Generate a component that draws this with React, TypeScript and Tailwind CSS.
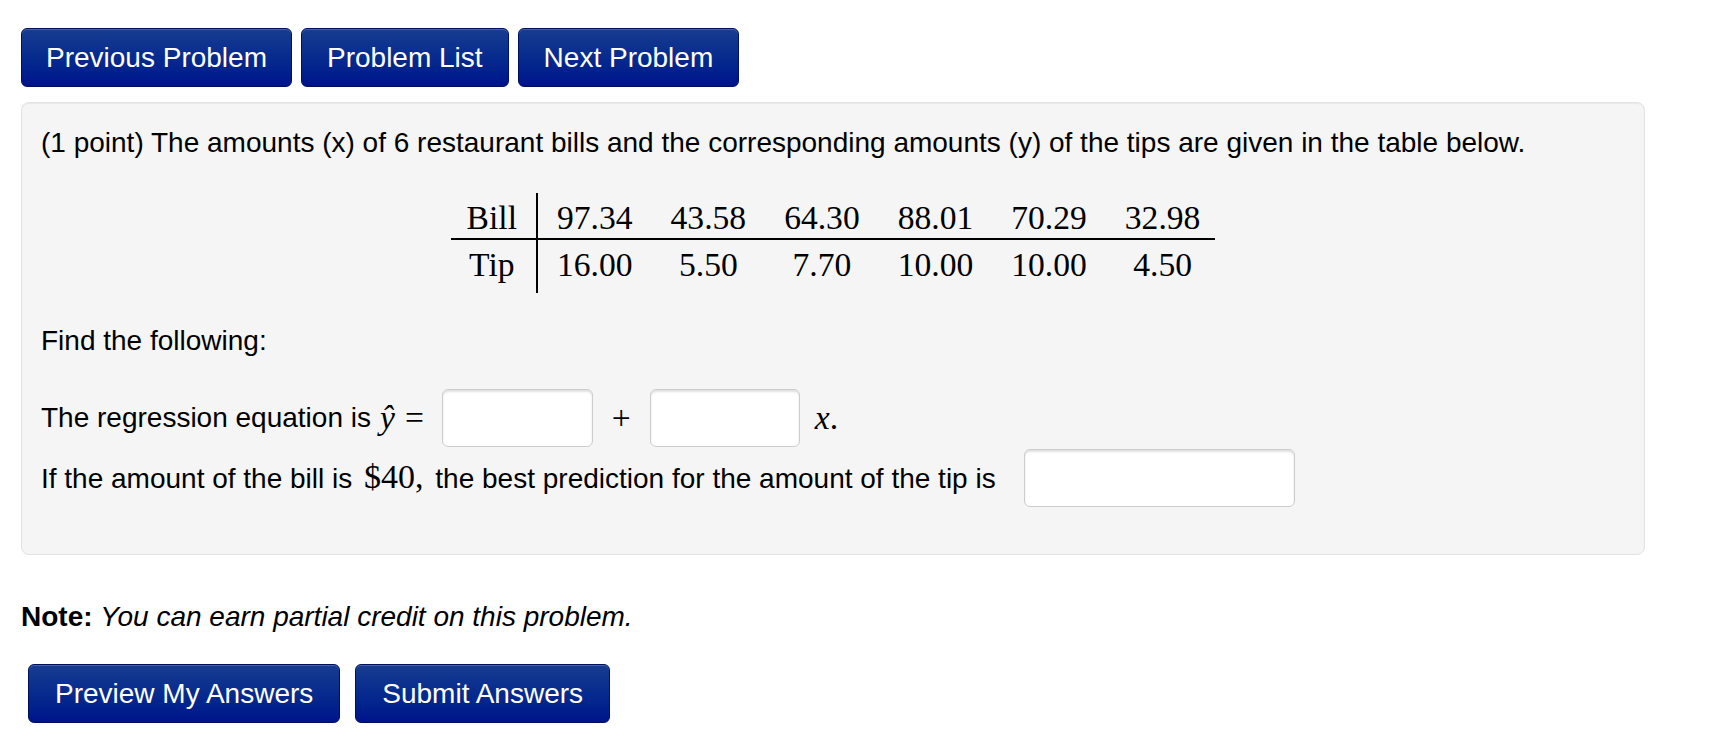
import React from 'react';

const bills = ['97.34', '43.58', '64.30', '88.01', '70.29', '32.98'];
const tips = ['16.00', '5.50', '7.70', '10.00', '10.00', '4.50'];

function NavButton({ label, pad = 'px-[26px]' }: { label: string; pad?: string }) {
  return (
    <button
      className={`h-[59px] ${pad} rounded-[6px] border border-[#001060] bg-gradient-to-b from-[#173c90] to-[#00128b] text-white text-[28px] leading-none shadow-[inset_0_1px_0_rgba(255,255,255,0.2)]`}
    >
      {label}
    </button>
  );
}

function AnswerBox({ width }: { width: string }) {
  return (
    <input
      type="text"
      className={`${width} h-[58px] bg-white border border-[#cccccc] rounded-[6px] shadow-[inset_0_2px_2px_rgba(0,0,0,0.12)] outline-none`}
    />
  );
}

export default function App() {
  const serif = "font-['Liberation_Serif',serif]";

  return (
    <div className="min-h-screen bg-white text-black font-['Liberation_Sans',Arial,sans-serif] text-[28px] leading-[40px]">
      <div className="pt-[28px] pl-[21px] flex gap-[9px]">
        <NavButton label="Previous Problem" pad="px-[24px]" />
        <NavButton label="Problem List" pad="px-[25px]" />
        <NavButton label="Next Problem" pad="px-[25px]" />
      </div>

      <div className="mt-[15px] ml-[21px] w-[1624px] bg-[#f5f5f5] border border-[#e3e3e3] rounded-[8px] px-[19px] pt-[20px] pb-[47px] shadow-[inset_0_1px_1px_rgba(0,0,0,0.05)]">
        <p>
          (1 point) The amounts (x) of 6 restaurant bills and the corresponding amounts (y) of the tips
          are given in the table below.
        </p>

        <div className="mt-[30px] flex justify-center">
          <table className={`${serif} text-[33.6px] leading-none border-collapse`}>
            <tbody>
              <tr className="h-[46px]">
                <td className="pl-[16px] pr-[19px] pt-[4px] text-center border-r-2 border-b-2 border-black">
                  Bill
                </td>
                {bills.map((b, i) => (
                  <td
                    key={i}
                    className={`pl-[19px] ${i === bills.length - 1 ? 'pr-[15px]' : 'pr-[19px]'} pt-[4px] text-center border-b-2 border-black`}
                  >
                    {b}
                  </td>
                ))}
              </tr>
              <tr className="h-[54px]">
                <td className="pl-[16px] pr-[19px] pb-[4px] text-center border-r-2 border-black">Tip</td>
                {tips.map((t, i) => (
                  <td
                    key={i}
                    className={`pl-[19px] ${i === tips.length - 1 ? 'pr-[15px]' : 'pr-[19px]'} pb-[4px] text-center`}
                  >
                    {t}
                  </td>
                ))}
              </tr>
            </tbody>
          </table>
        </div>

        <p className="mt-[28px]">Find the following:</p>

        <div className="mt-[28px] flex items-center h-[58px]">
          <span>The regression equation is</span>
          <span className={`${serif} text-[33.6px] ml-[9px]`}>
            <i>ŷ</i>
            <span className="ml-[10px]">=</span>
          </span>
          <span className="ml-[18px] flex">
            <AnswerBox width="w-[151px]" />
          </span>
          <span className={`${serif} text-[33.6px] mx-[19px]`}>+</span>
          <AnswerBox width="w-[150px]" />
          <span className={`${serif} text-[33.6px] ml-[15px]`}>
            <i>x</i>.
          </span>
        </div>

        <div className="mt-[2px] flex items-center h-[58px]">
          <span>
            If the amount of the bill is{' '}
            <span className={`${serif} text-[34px] mx-[4px]`}>$40,</span> the best prediction for the
            amount of the tip is
          </span>
          <span className="ml-[28px] flex">
            <AnswerBox width="w-[271px]" />
          </span>
        </div>
      </div>

      <p className="mt-[42px] ml-[21px]">
        <b>Note:</b> <i>You can earn partial credit on this problem.</i>
      </p>

      <div className="mt-[27px] ml-[28px] flex gap-[15px]">
        <NavButton label="Preview My Answers" />
        <NavButton label="Submit Answers" />
      </div>
    </div>
  );
}
